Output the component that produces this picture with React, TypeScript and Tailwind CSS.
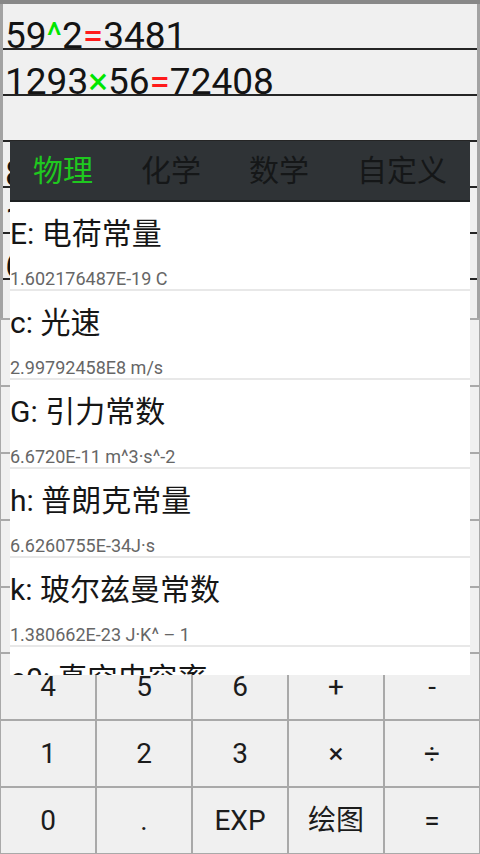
import React from "react";

const font = { fontFamily: 'Roboto, "Noto Sans CJK SC", sans-serif' };

const history: { parts: [string, string][] }[] = [
  { parts: [["59", ""], ["^", "g"], ["2", ""], ["=", "r"], ["3481", ""]] },
  { parts: [["1293", ""], ["×", "g"], ["56", ""], ["=", "r"], ["72408", ""]] },
  { parts: [] },
  { parts: [["8", ""], ["+", "g"], ["9", ""], ["=", "r"], ["17", ""]] },
  { parts: [["1", ""], ["÷", "g"], ["3", ""], ["=", "r"], ["0.3333", ""]] },
  { parts: [["6", ""], ["-", "g"], ["2", ""], ["=", "r"], ["4", ""]] },
];

const keys = [
  ["sin", "cos", "tan", "(", ")"],
  ["ln", "log", "√", "π", "e"],
  ["x²", "^", "!", "%", "ANS"],
  ["C", "DEL", "AC", "M+", "MR"],
  ["7", "8", "9", "(", ")"],
  ["4", "5", "6", "+", "-"],
  ["1", "2", "3", "×", "÷"],
  ["0", ".", "EXP", "绘图", "="],
];

const tabs = ["物理", "化学", "数学", "自定义"];

const constants = [
  { title: "E: 电荷常量", value: "1.602176487E-19 C" },
  { title: "c: 光速", value: "2.99792458E8 m/s" },
  { title: "G: 引力常数", value: "6.6720E-11 m^3·s^-2" },
  { title: "h: 普朗克常量", value: "6.6260755E-34J·s" },
  { title: "k: 玻尔兹曼常数", value: "1.380662E-23 J·K^ – 1" },
  { title: "e0: 真空电容率", value: "8.854187817E-12 F/m" },
];

export default function App() {
  return (
    <div className="relative w-[480px] h-[854px] overflow-hidden bg-[#f0f0f0] flex flex-col" style={font}>
      <div className="h-[4px] bg-[#888888] shrink-0" />
      {/* display */}
      <div className="h-[314px] shrink-0 border-x-[3px] border-[#a3a3a3] bg-[#f0f0f0] flex flex-col">
        {history.map((row, i) => (
          <div
            key={i}
            className="h-[46px] shrink-0 border-b-2 border-[#252525] pl-[2px] pt-[13px] text-[37px] leading-[37px] text-[#141414] whitespace-nowrap overflow-hidden"
          >
            {row.parts.map(([t, c], j) => (
              <span key={j} className={c === "g" ? "text-[#00e600]" : c === "r" ? "text-[#ff1a1a]" : ""}>
                {t}
              </span>
            ))}
          </div>
        ))}
      </div>
      {/* keypad */}
      <div className="flex-1 grid grid-cols-5 grid-rows-8 gap-[2px] bg-[#a9a9a9] pt-[2px] pl-[1px] pr-[1px] pb-[1px]">
        {keys.flat().map((k, i) => (
          <div key={i} className="bg-[#f0f0f0] flex items-center justify-center text-[28px] text-[#1c1c1c]">
            {k}
          </div>
        ))}
      </div>
      {/* constants popup */}
      <div className="absolute left-[10px] top-[141px] w-[460px] h-[534px] overflow-hidden bg-white flex flex-col">
        <div className="h-[61px] shrink-0 bg-[#2f3336] border-b-2 border-[#1d2021] flex items-center justify-between px-[23px]">
          {tabs.map((t, i) => (
            <span key={t} className={`text-[30px] leading-none ${i === 0 ? "text-[#1fc81f]" : "text-[#151718]"}`}>
              {t}
            </span>
          ))}
        </div>
        {constants.map((c) => (
          <div key={c.title} className="h-[89px] shrink-0 border-b-2 border-[#e8e8e8] flex flex-col pt-[14px]">
            <div className="text-[30px] leading-[36px] text-[#161616] whitespace-nowrap">{c.title}</div>
            <div className="mt-[17px] text-[18px] leading-[20px] text-[#666666] whitespace-nowrap">{c.value}</div>
          </div>
        ))}
      </div>
    </div>
  );
}
